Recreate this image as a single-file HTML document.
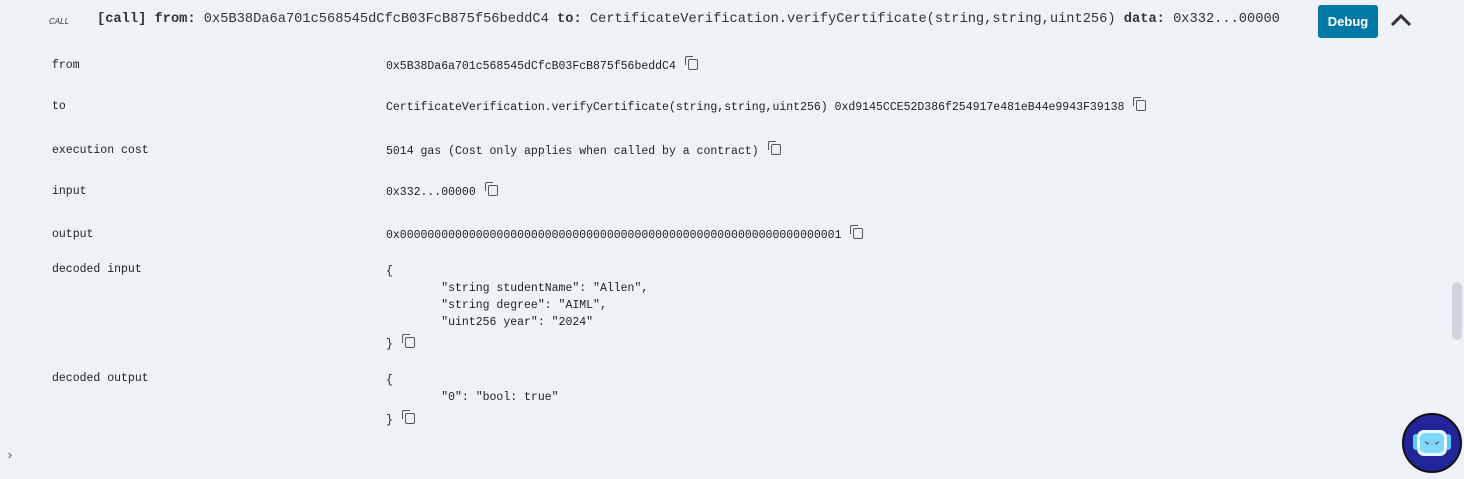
<!DOCTYPE html>
<html><head><style>
body{margin:0;width:1464px;height:479px;background:#eef1f6;font-family:"Liberation Mono",monospace;color:#222;position:relative;overflow:hidden}
.a{position:absolute;white-space:pre;line-height:14px}
.s{font-size:11.5px}
.h{font-size:13.7px}
.cp{display:inline-block;width:8px;height:9px;border:1.2px solid #555;border-radius:2px;position:relative;margin-left:12px;vertical-align:-1px}
.cp:before{content:"";position:absolute;left:-4px;top:-4px;width:7px;height:8px;border-left:1.2px solid #555;border-top:1.2px solid #555;border-radius:2px 0 0 0}
</style></head><body>
<div class="a" style="left:49px;top:15px;font-size:8px;font-style:italic;font-family:'Liberation Sans',sans-serif;color:#333">CALL</div>
<div class="a h" style="left:97px;top:13px;color:#333"><b>[call]</b> <b>from:</b> 0x5B38Da6a701c568545dCfcB03FcB875f56beddC4 <b>to:</b> CertificateVerification.verifyCertificate(string,string,uint256) <b>data:</b> 0x332...00000</div>
<div class="a" style="left:1318px;top:5px;width:60px;height:33px;background:#0079a6;border-radius:3px;color:#fff;font:bold 13px 'Liberation Sans',sans-serif;line-height:33px;text-align:center">Debug</div>
<svg class="a" style="left:1390px;top:13px" width="22" height="14"><path d="M2 12 L11 3 L20 12" fill="none" stroke="#333" stroke-width="3"/></svg>

<div class="a s" style="left:52px;top:59px">from</div><div class="a s" style="left:386px;top:59px">0x5B38Da6a701c568545dCfcB03FcB875f56beddC4<span class="cp"></span></div>
<div class="a s" style="left:52px;top:100px">to</div><div class="a s" style="left:386px;top:100px">CertificateVerification.verifyCertificate(string,string,uint256) 0xd9145CCE52D386f254917e481eB44e9943F39138<span class="cp"></span></div>
<div class="a s" style="left:52px;top:144px">execution cost</div><div class="a s" style="left:386px;top:144px">5014 gas (Cost only applies when called by a contract)<span class="cp"></span></div>
<div class="a s" style="left:52px;top:185px">input</div><div class="a s" style="left:386px;top:185px">0x332...00000<span class="cp"></span></div>
<div class="a s" style="left:52px;top:228px">output</div><div class="a s" style="left:386px;top:228px">0x0000000000000000000000000000000000000000000000000000000000000001<span class="cp"></span></div>
<div class="a s" style="left:52px;top:263px">decoded input</div>
<div class="a s" style="left:386px;top:263px;line-height:17px">{
	"string studentName": "Allen",
	"string degree": "AIML",
	"uint256 year": "2024"
</div>
<div class="a s" style="left:386px;top:337px">}<span class="cp"></span></div>
<div class="a s" style="left:52px;top:372px">decoded output</div>
<div class="a s" style="left:386px;top:372px;line-height:17px">{
	"0": "bool: true"
</div>
<div class="a s" style="left:386px;top:413px">}<span class="cp"></span></div>
<div class="a" style="left:6px;top:449px;font-size:13px;color:#555">›</div>
<div class="a" style="left:1452px;top:282px;width:10px;height:58px;background:#cfd5de;border-radius:5px"></div>
<svg class="a" style="left:1401px;top:412px" width="62" height="62"><circle cx="31" cy="31" r="29" fill="#22249a" stroke="#111" stroke-width="2"/><rect x="12" y="22" width="6" height="16" rx="3" fill="#5ac8f5"/><rect x="44" y="22" width="6" height="16" rx="3" fill="#5ac8f5"/><rect x="16" y="18" width="30" height="26" rx="7" fill="#eaf8ff"/><rect x="19" y="21" width="24" height="20" rx="5" fill="#7fd8f8"/><path d="M24 30l4 2M38 30l-4 2" stroke="#446" stroke-width="1"/></svg>
</body></html>
